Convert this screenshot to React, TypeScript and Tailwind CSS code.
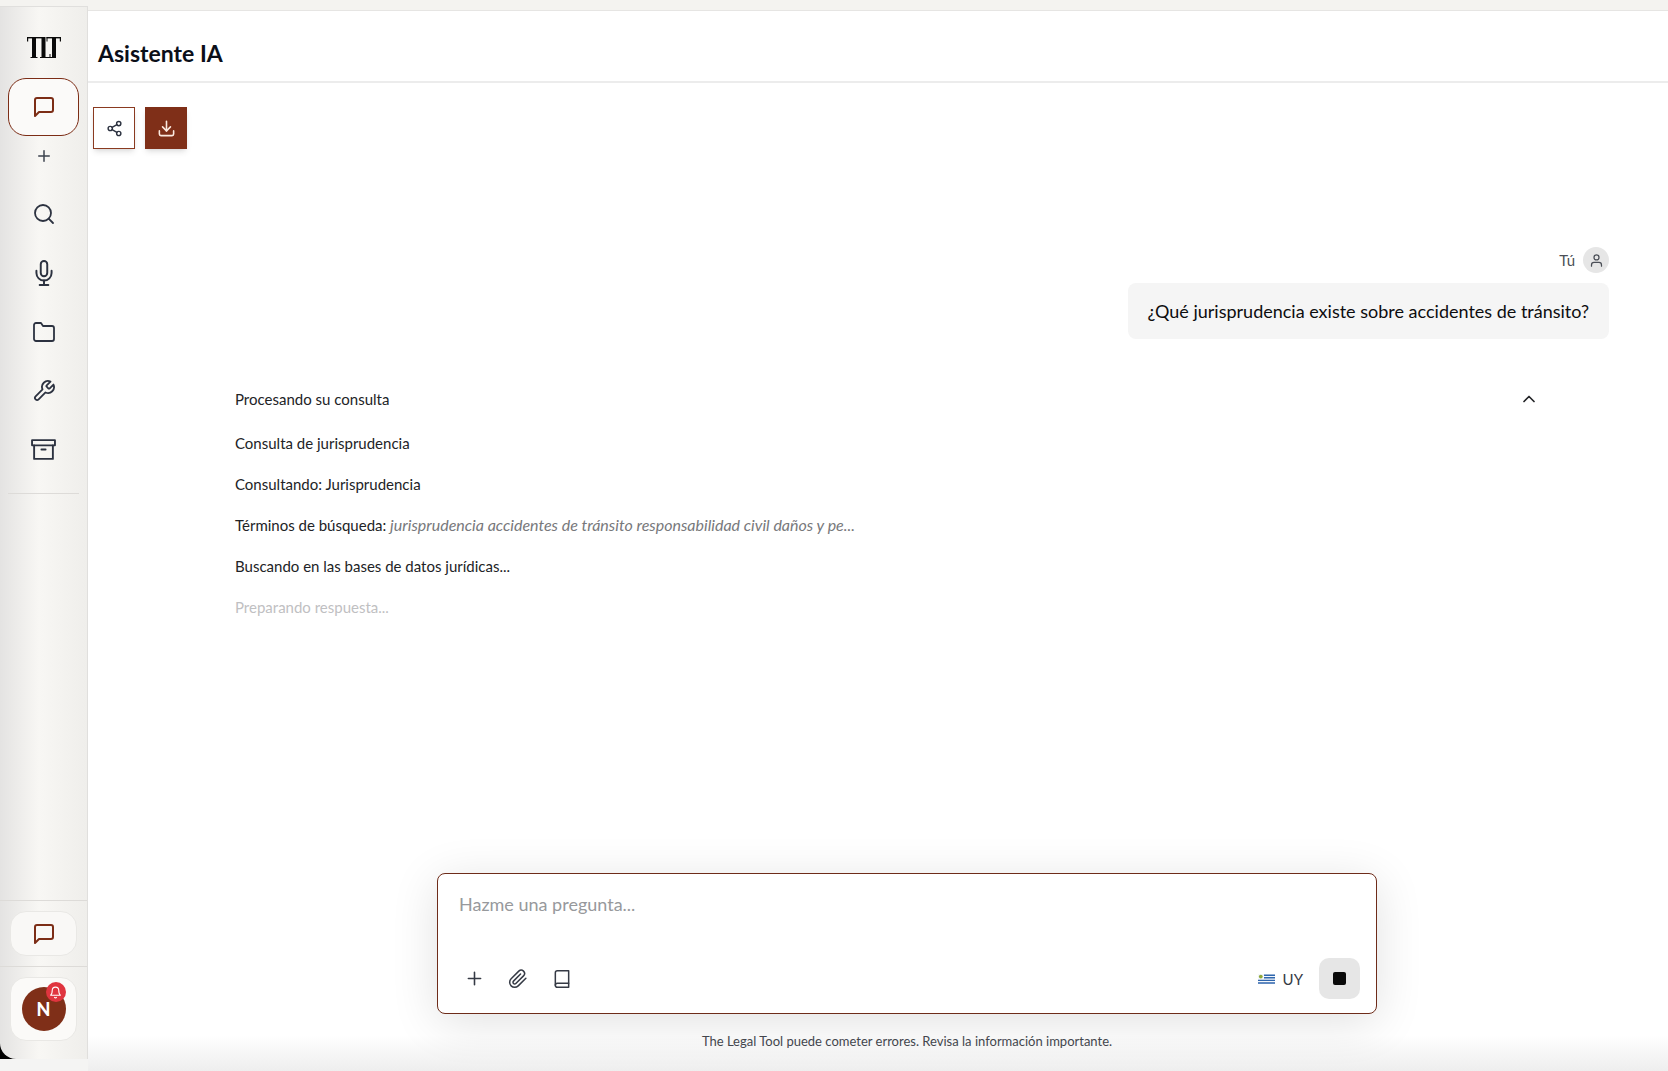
import { useState } from "react";
import type { ReactNode } from "react";
import {
  FiArchive,
  FiBell,
  FiBook,
  FiChevronUp,
  FiDownload,
  FiFolder,
  FiMessageSquare,
  FiMic,
  FiPaperclip,
  FiPlus,
  FiSearch,
  FiShare2,
  FiTool,
  FiUser,
} from "react-icons/fi";

function Logo() {
  return (
    <svg width="34" height="21" viewBox="0 0 34 21" role="img" aria-label="TLT" fill="#0a0a0a">
      <rect x="0" y="0" width="17" height="1.4" />
      <rect x="0" y="0" width="1.2" height="4.5" />
      <rect x="5" y="0" width="4" height="21" />
      <rect x="3.5" y="20" width="7" height="1" />
      <rect x="14.5" y="0" width="4" height="21" />
      <rect x="13" y="20" width="16" height="1" />
      <rect x="19.5" y="0" width="14.5" height="1.4" />
      <rect x="19.5" y="0" width="1" height="4.5" />
      <rect x="32.8" y="0" width="1.2" height="4.5" />
      <rect x="25" y="0" width="4" height="21" />
      <rect x="22.5" y="17" width="1" height="4" />
    </svg>
  );
}

function UruguayFlag() {
  return (
    <svg width="17" height="10" viewBox="0 0 17 10" aria-hidden="true">
      <rect width="17" height="10" fill="#f4f7fb" />
      <path d="M6 1.2h11M6 3.8h11M0 6.4h17M0 9h17" stroke="#2f66ad" strokeWidth="1.4" />
      <circle cx="2.8" cy="2.6" r="1.9" fill="#8fa83a" />
    </svg>
  );
}

function NavItem({ label, children }: { label: string; children: ReactNode }) {
  return (
    <li>
      <a href="#" aria-label={label} className="flex h-[59px] w-[60px] items-center justify-center text-[#2c3240]">
        {children}
      </a>
    </li>
  );
}

function Sidebar() {
  return (
    <aside className="flex w-[88px] flex-1 flex-col rounded-bl-2xl border-t border-r border-[#e0dfdd] bg-linear-to-r from-[#e4e3e2] via-[#f8f7f4] via-45% to-[#efeeeb]">
      <div className="flex flex-col items-center px-2 pt-[30px]">
        <Logo />
        <a
          href="#"
          aria-label="Asistente IA"
          aria-current="page"
          className="mt-5 flex h-[58px] w-full items-center justify-center rounded-[18px] border border-[#7c2d16] bg-[#fbfaf9] text-[#7c2d16]"
        >
          <FiMessageSquare size={24} strokeWidth={2} />
        </a>
        <button type="button" aria-label="Nueva conversación" className="flex h-10 w-10 items-center justify-center text-[#3d434e]">
          <FiPlus size={18} strokeWidth={2} />
        </button>
        <nav className="mt-2 w-full border-b border-[#dddbd8] pb-[14px]">
          <ul className="flex flex-col items-center">
            <NavItem label="Buscar"><FiSearch size={24} strokeWidth={1.8} /></NavItem>
            <NavItem label="Audio"><FiMic size={26} strokeWidth={1.8} /></NavItem>
            <NavItem label="Carpetas"><FiFolder size={24} strokeWidth={1.8} /></NavItem>
            <NavItem label="Herramientas"><FiTool size={24} strokeWidth={1.8} /></NavItem>
            <NavItem label="Archivo"><FiArchive size={25} strokeWidth={1.8} /></NavItem>
          </ul>
        </nav>
      </div>
      <div className="flex-1" />
      <div className="border-t border-[#dddbd8] p-[10px]">
        <button
          type="button"
          aria-label="Soporte"
          className="flex h-[45px] w-full items-center justify-center rounded-2xl border border-[#e9e8e5] bg-[#f9f8f6] text-[#7c2d16]"
        >
          <FiMessageSquare size={24} strokeWidth={2} />
        </button>
      </div>
      <div className="border-t border-[#dddbd8] px-[10px] pt-[10px] pb-[18px]">
        <button type="button" aria-label="Perfil" className="flex h-16 w-full items-center justify-center rounded-2xl border border-[#e9e8e5] bg-[#fbfaf8]">
          <span className="relative flex h-11 w-11 items-center justify-center rounded-full bg-[#7f2f18] text-lg font-black text-white">
            N
            <span className="absolute -top-[5px] right-0 flex h-5 w-5 items-center justify-center rounded-full bg-[#e0353f]">
              <FiBell size={13} strokeWidth={2} />
            </span>
          </span>
        </button>
      </div>
    </aside>
  );
}

function Conversation() {
  const [open, setOpen] = useState(true);
  return (
    <section className="flex flex-1 flex-col px-[59px] pt-[98px]">
      <div className="flex flex-col items-end">
        <div className="flex items-center gap-2 text-[15px] leading-6 text-[#4b4f57]">
          <span>Tú</span>
          <span className="flex h-[26px] w-[26px] items-center justify-center rounded-full bg-[#e6e6e6]">
            <FiUser size={15} strokeWidth={2} />
          </span>
        </div>
        <p className="mt-[10px] rounded-lg bg-[#f5f5f5] px-5 py-[14px] text-lg leading-7 text-[#0d0d0f]">
          ¿Qué jurisprudencia existe sobre accidentes de tránsito?
        </p>
      </div>
      <div className="mt-12 pr-[70px] pl-[30px] text-[15px] leading-6 text-[#222326]">
        <button type="button" aria-expanded={open} onClick={() => setOpen(!open)} className="flex w-full items-center justify-between text-left">
          <span>Procesando su consulta</span>
          <FiChevronUp size={20} strokeWidth={2} />
        </button>
        {open && (
          <ul className="mt-5 flex flex-col gap-[17px]">
            <li>Consulta de jurisprudencia</li>
            <li>Consultando: Jurisprudencia</li>
            <li>
              Términos de búsqueda:{" "}
              <em className="text-base leading-6 text-[#77787b]">
                jurisprudencia accidentes de tránsito responsabilidad civil daños y pe...
              </em>
            </li>
            <li>Buscando en las bases de datos jurídicas...</li>
            <li className="text-[#bfc0c2]">Preparando respuesta...</li>
          </ul>
        )}
      </div>
    </section>
  );
}

function Composer() {
  return (
    <form className="mx-auto w-full max-w-[940px] rounded-lg border border-[#6e2c1a] bg-white px-4 pt-3 pb-[14px] shadow-[0_8px_48px_rgba(0,0,0,0.12)]">
      <textarea
        aria-label="Pregunta"
        placeholder="Hazme una pregunta..."
        className="block h-[72px] w-full resize-none bg-transparent px-[5px] py-1 text-lg leading-7 outline-none placeholder:text-[#97999c]"
      />
      <div className="flex items-center justify-between text-[#353a45]">
        <div className="flex items-center gap-1">
          <button type="button" aria-label="Agregar" className="flex h-10 w-10 items-center justify-center">
            <FiPlus size={21} strokeWidth={1.8} />
          </button>
          <button type="button" aria-label="Adjuntar archivo" className="flex h-10 w-10 items-center justify-center">
            <FiPaperclip size={20} strokeWidth={1.8} />
          </button>
          <button type="button" aria-label="Biblioteca" className="flex h-10 w-10 items-center justify-center">
            <FiBook size={20} strokeWidth={1.8} />
          </button>
        </div>
        <div className="flex items-center gap-4">
          <button type="button" className="flex items-center gap-2 text-[15px] leading-6">
            <UruguayFlag />
            <span>UY</span>
          </button>
          <button type="button" aria-label="Detener" className="flex h-[41px] w-[41px] items-center justify-center rounded-[10px] bg-[#e6e6e6]">
            <span className="h-[13px] w-[13px] rounded-[2px] bg-[#0a0a0a]" />
          </button>
        </div>
      </div>
    </form>
  );
}

export default function App() {
  return (
    <div className="flex min-h-screen flex-col bg-[#f4f3f0] pt-[6px] font-[Lato,sans-serif]">
      <div className="flex flex-1">
        <div className="flex shrink-0 flex-col bg-[#f4f4f3] pb-3">
          <div className="flex flex-1 bg-linear-to-b from-[#f4f3f0] from-50% to-black to-50%">
            <Sidebar />
          </div>
        </div>
        <main className="mt-1 flex min-w-0 flex-1 flex-col border-t border-[#e6e5e3] bg-linear-to-t from-[#eeeeee] to-white to-[36px]">
          <header className="flex h-[72px] items-center border-b-2 border-[#ececec] px-[10px] pt-[14px]">
            <h1 className="text-[23px] leading-7 font-bold text-[#0b0f19]">Asistente IA</h1>
          </header>
          <div className="flex gap-[10px] px-[5px] pt-6">
            <button
              type="button"
              aria-label="Compartir"
              className="flex h-[42px] w-[42px] items-center justify-center border border-[#8a3a20] bg-white text-[#2c3240] shadow-md"
            >
              <FiShare2 size={17} strokeWidth={2} />
            </button>
            <button
              type="button"
              aria-label="Descargar"
              className="flex h-[42px] w-[42px] items-center justify-center bg-[#7f2f18] text-[#fbe9df] shadow-md"
            >
              <FiDownload size={19} strokeWidth={2} />
            </button>
          </div>
          <div className="flex flex-1 flex-col pl-[58px]">
            <Conversation />
            <Composer />
            <p className="pt-[17px] pb-5 text-center text-[13px] leading-5 text-[#43464d]">
              The Legal Tool puede cometer errores. Revisa la información importante.
            </p>
          </div>
        </main>
      </div>
    </div>
  );
}
